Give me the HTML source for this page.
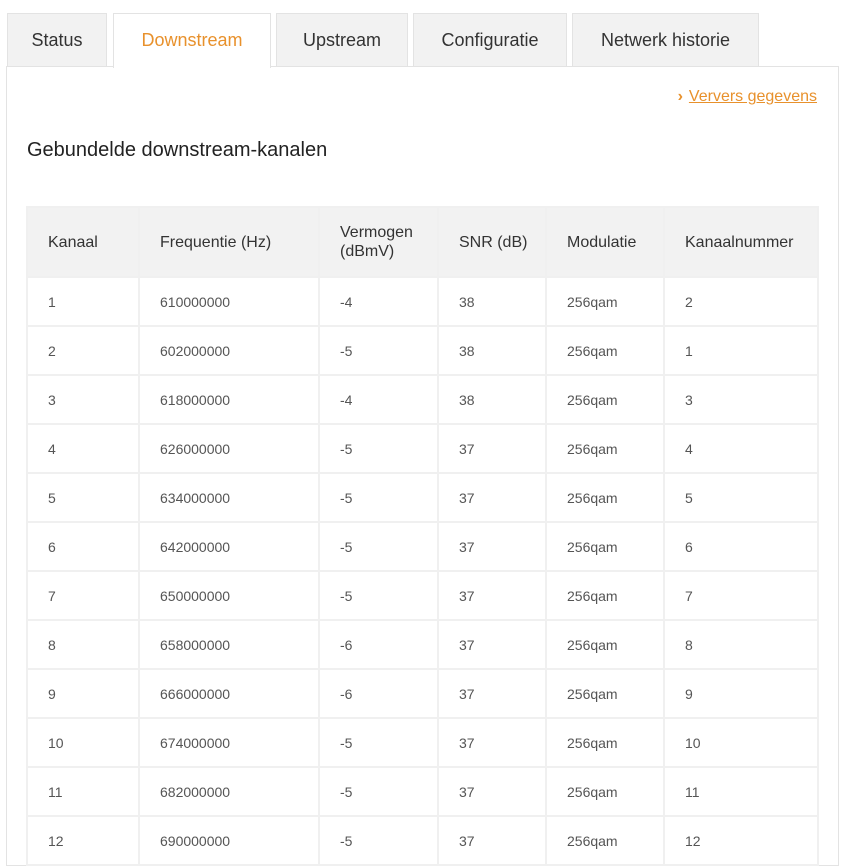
<!DOCTYPE html>
<html><head><meta charset="utf-8"><style>
body{margin:0;background:#fff;width:860px;height:827px;overflow:hidden;font-family:"Liberation Sans","DejaVu Sans",sans-serif;position:relative}
.tab{position:absolute;top:13px;height:53px;background:#f2f2f2;border:1px solid #e3e3e3;border-bottom:none;box-sizing:border-box;font-size:18px;color:#333;text-align:center;line-height:52px}
.tab.act{background:#fff;color:#e8912c;height:55px;z-index:2}
.panel{position:absolute;left:6px;top:66px;width:833px;height:800px;border:1px solid #e3e3e3;box-sizing:border-box}
.link{position:absolute;right:43px;top:88px;font-size:16px;color:#e8912c;text-decoration:underline}
.link b{text-decoration:none;display:inline-block;margin-right:6px;font-weight:bold}
h2{position:absolute;left:27px;top:139px;margin:0;font-weight:normal;font-size:20px;color:#222}
table{position:absolute;left:26px;top:206px;border-collapse:collapse}
td,th{border:2px solid #f0f0f0;text-align:left;padding:0 0 0 20px;box-sizing:border-box}
th{background:#f2f2f2;height:70px;font-weight:normal;font-size:16px;color:#333;line-height:19px}
td{height:49px;font-size:14px;color:#555}
</style></head><body>
<div class="tab" style="left:7px;width:100px">Status</div>
<div class="tab act" style="left:113px;width:158px">Downstream</div>
<div class="tab" style="left:276px;width:132px">Upstream</div>
<div class="tab" style="left:413px;width:154px">Configuratie</div>
<div class="tab" style="left:572px;width:187px">Netwerk historie</div>
<div class="panel"></div>
<div class="link"><b>›</b>Ververs gegevens</div>
<h2>Gebundelde downstream-kanalen</h2>
<table>
<tr><th style="width:112px">Kanaal</th><th style="width:180px">Frequentie (Hz)</th><th style="width:119px">Vermogen<br>(dBmV)</th><th style="width:108px">SNR (dB)</th><th style="width:118px">Modulatie</th><th style="width:154px">Kanaalnummer</th></tr>
<tr><td>1</td><td>610000000</td><td>-4</td><td>38</td><td>256qam</td><td>2</td></tr>
<tr><td>2</td><td>602000000</td><td>-5</td><td>38</td><td>256qam</td><td>1</td></tr>
<tr><td>3</td><td>618000000</td><td>-4</td><td>38</td><td>256qam</td><td>3</td></tr>
<tr><td>4</td><td>626000000</td><td>-5</td><td>37</td><td>256qam</td><td>4</td></tr>
<tr><td>5</td><td>634000000</td><td>-5</td><td>37</td><td>256qam</td><td>5</td></tr>
<tr><td>6</td><td>642000000</td><td>-5</td><td>37</td><td>256qam</td><td>6</td></tr>
<tr><td>7</td><td>650000000</td><td>-5</td><td>37</td><td>256qam</td><td>7</td></tr>
<tr><td>8</td><td>658000000</td><td>-6</td><td>37</td><td>256qam</td><td>8</td></tr>
<tr><td>9</td><td>666000000</td><td>-6</td><td>37</td><td>256qam</td><td>9</td></tr>
<tr><td>10</td><td>674000000</td><td>-5</td><td>37</td><td>256qam</td><td>10</td></tr>
<tr><td>11</td><td>682000000</td><td>-5</td><td>37</td><td>256qam</td><td>11</td></tr>
<tr><td>12</td><td>690000000</td><td>-5</td><td>37</td><td>256qam</td><td>12</td></tr>
</table>
</body></html>
